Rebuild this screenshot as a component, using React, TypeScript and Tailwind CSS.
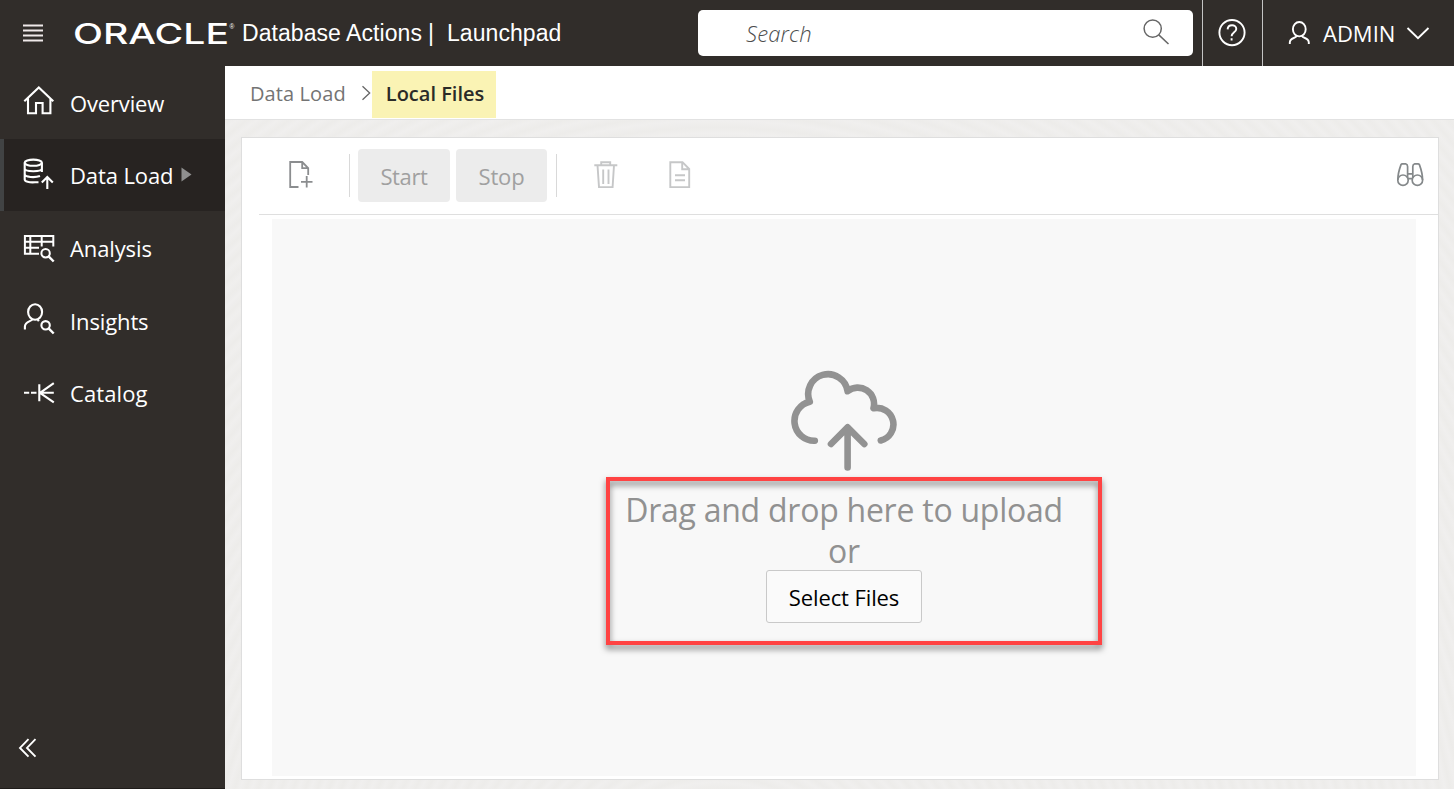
import type { ReactNode } from "react";

type IconProps = {
  w: number;
  h: number;
  stroke?: number;
  className?: string;
  children: ReactNode;
};

function Icon({ w, h, stroke = 1.8, className = "", children }: IconProps) {
  return (
    <svg
      width={w}
      height={h}
      viewBox={`0 0 ${w} ${h}`}
      fill="none"
      stroke="currentColor"
      strokeWidth={stroke}
      className={`shrink-0 ${className}`}
    >
      {children}
    </svg>
  );
}

const HomeIcon = () => (
  <Icon w={34} h={34} stroke={2.1}>
    <path d="M2.3 17.2 16.8 3.4 31.3 17.2M6 14V29.3H14V19H20.6V29.3H28.4V14" />
  </Icon>
);

const DataLoadIcon = () => (
  <Icon w={34} h={34} stroke={2.1}>
    <ellipse cx="11.3" cy="6.7" rx="8.6" ry="3.1" />
    <path d="M2.7 6.7V23.5C2.7 25.6 7 26.7 13 26.3H16.5M19.9 6.7V16M2.7 12.5C2.7 16.2 19.9 16.2 19.9 12.5M2.7 18C2.7 21.4 13 21.8 18 20" />
    <path d="M25.3 33V21M19.8 26.6 25.3 21 30.8 26.6" />
  </Icon>
);

const AnalysisIcon = () => (
  <Icon w={34} h={34} stroke={2}>
    <path d="M31.3 14.5V4H2.9V21.7H17M2.9 9.7H31.3M2.9 15.7H17M8.3 4V21.7M19.7 4V14.5" />
    <circle cx="23.6" cy="21.3" r="4.2" />
    <path d="M26.6 24.3 31.7 29.5" strokeWidth="2.4" />
  </Icon>
);

const InsightsIcon = () => (
  <Icon w={34} h={36} stroke={2.1}>
    <ellipse cx="13.1" cy="12" rx="7" ry="7.8" />
    <path d="M10.3 19.2C9.8 21.3 3 21.5 2.9 26.5V29.5M15.5 19.2 16.8 21.2" />
    <circle cx="23.6" cy="25.3" r="4.2" />
    <path d="M26.6 28.3 31.7 33.5" strokeWidth="2.4" />
  </Icon>
);

const CatalogIcon = () => (
  <Icon w={34} h={26} stroke={2.1}>
    <path d="M2 12.8H7.2M9 12.8H14.5M17.3 4.2V21.3M17.5 12.8H31.8M18 12.8 31.8 3.2M18 12.8 31.8 22.4" />
  </Icon>
);

const nav = [
  { label: "Overview", icon: <HomeIcon />, row: "h-[73px]", iconBox: "-mt-[3px]", text: "tracking-[-0.15px]" },
  { label: "Data Load", icon: <DataLoadIcon />, row: "h-[72px]", iconBox: "-mt-[4px]", text: "tracking-[-0.1px]", active: true },
  { label: "Analysis", icon: <AnalysisIcon />, row: "h-[73px]", iconBox: "mt-[3px]", text: "tracking-[-0.12px]" },
  { label: "Insights", icon: <InsightsIcon />, row: "h-[72px]", iconBox: "-mt-[4px]", text: "pt-[2px] tracking-[-0.12px]" },
  { label: "Catalog", icon: <CatalogIcon />, row: "h-[73px]", iconBox: "mt-[1px]", text: "tracking-[0.1px]" },
];

function Header() {
  return (
    <header className="flex h-[66px] shrink-0 items-stretch bg-[#312d2a] text-white">
      <div className="flex w-[698px] items-center pl-[23px]">
        <Icon w={20} h={18} stroke={2} className="text-[#efe9e9]">
          <path d="M0 1.5H20M0 6.5H20M0 11.5H20M0 16.5H20" />
        </Icon>
        <svg width="164" height="40" viewBox="0 -7 164 40" className="ml-[30px] shrink-0 overflow-visible" fill="white">
          <text
            x="0"
            y="23.5"
            fontFamily="Inter, sans-serif"
            fontSize="28"
            fontWeight="500"
            textLength="156"
            lengthAdjust="spacingAndGlyphs"
          >
            ORACLE
          </text>
          <text x="156.5" y="9" fontFamily="Liberation Sans, sans-serif" fontSize="6.5">
            ®
          </text>
        </svg>
        <div className="ml-[5px] flex whitespace-pre font-['Liberation_Sans',sans-serif] text-[23px] leading-[26px] tracking-[0.06px]">
          <span>Database Actions</span>
          <span className="ml-[6px]">|</span>
          <span className="ml-[13px]">Launchpad</span>
        </div>
      </div>
      <div className="mt-[10px] flex h-[46px] w-[495px] items-center justify-between rounded-[5px] bg-white pr-[23px] pl-[48px] text-[#666]">
        <span className="pt-[1px] text-[22px] font-light tracking-[0.15px] text-[#4c4c4c] italic">Search</span>
        <Icon w={28} h={28} stroke={1.5} className="-mt-[3px]">
          <circle cx="10.7" cy="10.6" r="8.6" />
          <path d="M16.8 16.9 26.5 26" />
        </Icon>
      </div>
      <div className="ml-[9px] flex w-[61px] items-center justify-center border-x border-[#c4c4c4]">
        <Icon w={28} h={28} stroke={1.9} className="-ml-px">
          <circle cx="14" cy="13.6" r="12.6" />
          <path d="M9.6 10.4C9.8 4.8 18.4 4.9 18.3 10C18.2 13.3 13.6 13.4 13.6 17.3M13.6 19.3V21.6" />
        </Icon>
      </div>
      <div className="flex flex-1 items-center pl-[25px]">
        <Icon w={23} h={26} stroke={1.9}>
          <ellipse cx="11.3" cy="9.2" rx="6.4" ry="7.2" />
          <path d="M8.8 15.5C8.2 19 1.8 17 1.8 22.5V24M13.8 15.5C14.4 19 20.8 17 20.8 22.5V24" />
        </Icon>
        <span className="ml-[12px] text-[22px] leading-[30px]">ADMIN</span>
        <Icon w={24} h={14} stroke={1.9} className="ml-[11px]">
          <path d="M1.5 2 12 12.2 22.5 2" />
        </Icon>
      </div>
    </header>
  );
}

function Sidebar() {
  return (
    <aside className="flex w-[225px] shrink-0 flex-col border-b border-[#1f1c1a] bg-[#312d2a] text-white">
      {nav.map((n) => (
        <div
          key={n.label}
          className={`flex items-center border-l-4 pl-[18px] ${n.row} ${
            n.active ? "border-[#414344] bg-[#272321]" : "border-transparent"
          }`}
        >
          <div className={n.iconBox}>{n.icon}</div>
          <span className={`ml-[14px] text-[22px] leading-[30px] whitespace-nowrap ${n.text}`}>{n.label}</span>
          {n.active && (
            <svg width="11" height="15" viewBox="0 0 11 15" className="-mt-[1px] ml-[8px] shrink-0">
              <path d="M0.5 0.5 10.5 7.5 0.5 14.5Z" fill="#8f8f8f" />
            </svg>
          )}
        </div>
      ))}
      <div className="mt-auto mb-[30px] ml-[18px]">
        <Icon w={20} h={20} stroke={1.9}>
          <path d="M10.5 1.2 2 9.9 10.5 18.7M17.5 1.2 9 9.9 17.5 18.7" />
        </Icon>
      </div>
    </aside>
  );
}

function Breadcrumb() {
  return (
    <nav className="flex h-[54px] shrink-0 border-b border-[#e2e2e2] bg-white text-[20px] leading-[28px]">
      <span className="w-[112px] pt-[14px] pl-[25px] tracking-[0.1px] whitespace-nowrap text-[#747474]">Data Load</span>
      <Icon w={10} h={16} stroke={1.3} className="mt-[19px] ml-[24px] text-[#666]">
        <path d="M1.5 1.2 8.7 8 1.5 14.8" />
      </Icon>
      <span className="mt-[5px] ml-[1px] flex h-[47px] w-[124px] items-start justify-center bg-[#faf3b4] pt-[9px] pl-[2px] font-semibold whitespace-nowrap text-[#2b2b28]">
        Local Files
      </span>
    </nav>
  );
}

function Toolbar() {
  return (
    <div className="ml-[17px] flex h-[77px] shrink-0 items-start border-b border-[#dfdfdf] pt-[11px]">
      <Icon w={28} h={30} stroke={1.8} className="mt-[11px] ml-[27px] text-[#8b8d8f]">
        <path d="M12.5 27H4.2V2H16.2L22.2 8.2V15M16.2 2V8.2H22.2M20.7 16V27.5M15 21.8H26.5" />
      </Icon>
      <div className="mt-[5px] ml-[35px] h-[43px] w-px bg-[#d9d9d9]" />
      <button className="ml-[8px] h-[53px] w-[92px] rounded-[4px] bg-[#ececec] pt-[1px] text-[22px] tracking-[-0.35px] text-[#a0a0a0]">
        Start
      </button>
      <button className="ml-[6px] h-[53px] w-[91px] rounded-[4px] bg-[#ececec] pt-[1px] text-[22px] tracking-[-0.2px] text-[#a0a0a0]">
        Stop
      </button>
      <div className="mt-[5px] ml-[9px] h-[43px] w-px bg-[#d9d9d9]" />
      <Icon w={28} h={30} stroke={1.9} className="mt-[11px] ml-[35px] text-[#c6c7c8]">
        <path d="M2.3 5.3H25.3M9.2 5.3V2.2H18.2V5.3M5.5 5.3 7 27.1H20.6L22 5.3M11.2 9.5V24M16.5 9.5V24" />
      </Icon>
      <Icon w={24} h={30} stroke={1.9} className="mt-[11px] ml-[48px] text-[#c6c7c8]">
        <path d="M2.3 2.2H14.5L21.2 9V27.1H2.3ZM14.2 2.2V9.2H21.2M7 15.3H17M7 20.3H17" />
      </Icon>
      <Icon w={30} h={28} stroke={1.7} className="mt-[12px] mr-[13px] ml-auto text-[#84888a]">
        <circle cx="8" cy="19.2" r="5.2" />
        <circle cx="22.4" cy="19.2" r="5.2" />
        <path d="M2.8 19C2.8 12.5 4.4 8 6 3.6Q6.4 2.8 7.4 2.8H10.6Q12.6 3.4 12.6 5.5V17M27.6 19C27.6 12.5 26 8 24.4 3.6Q24 2.8 23 2.8H19.8Q17.8 3.4 17.8 5.5V17M12.6 12.8H17.8M13 17.6H17.4" />
      </Icon>
    </div>
  );
}

function DropZone() {
  return (
    <div className="relative mt-[4px] mr-[22px] mb-[3px] ml-[30px] flex flex-1 flex-col items-center bg-[#f8f8f8] pt-[151px]">
      <svg
        width="110"
        height="102"
        viewBox="789 370 110 102"
        fill="none"
        stroke="#929292"
        strokeWidth="6.6"
        strokeLinecap="round"
        strokeLinejoin="round"
      >
        <path d="M814.8 440.7A19.7 19.7 0 0 1 809.8 401.8A19.8 19.8 0 1 1 847.6 391.2A16.3 16.3 0 0 1 873.5 408.2A16.56 16.56 0 0 1 880.8 440.5" />
        <path d="M847.6 467.5V427.5M831 444 847.6 427.3 864.3 444" />
      </svg>
      <p className="mt-[17px] text-center text-[32px] leading-[41px] tracking-[-0.25px] text-[#919191]">
        Drag and drop here to upload
        <br />
        or
      </p>
      <button className="-mt-px h-[53px] w-[156px] rounded-[3px] border border-[#c9c9c9] bg-[#fafafa] pt-[1px] text-[22px] tracking-[-0.1px] text-black">
        Select Files
      </button>
      <div className="pointer-events-none absolute top-[258px] left-[334px] h-[168px] w-[496px] border-4 border-[#ff4343] drop-shadow-[0_4px_3px_rgba(0,0,0,0.5)]" />
    </div>
  );
}

export default function App() {
  return (
    <div className="flex h-[789px] w-[1454px] flex-col overflow-hidden font-['Open_Sans','Noto_Sans',sans-serif]">
      <Header />
      <div className="flex min-h-0 flex-1">
        <Sidebar />
        <div className="flex min-w-0 flex-1 flex-col">
          <Breadcrumb />
          <main className="flex min-h-0 flex-1 bg-[#efeeed] bg-[repeating-radial-gradient(ellipse_at_40%_130%,#f0efee_0px,#edecea_5px,#f0efee_11px)] pt-[17px] pr-[15px] pb-[9px] pl-[16px]">
            <section className="flex flex-1 flex-col border border-[#dedede] bg-white">
              <Toolbar />
              <DropZone />
            </section>
          </main>
        </div>
      </div>
    </div>
  );
}
